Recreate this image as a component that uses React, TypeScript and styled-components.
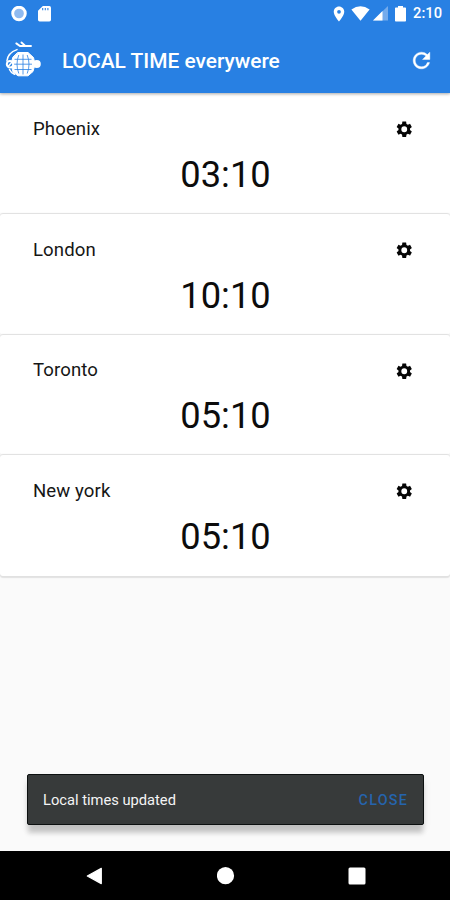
import React from "react";
import styled, { createGlobalStyle } from "styled-components";
import { MdLocationOn } from "react-icons/md";

const GlobalStyle = createGlobalStyle`
  * { box-sizing: border-box; }
  body { margin: 0; background: #fafafa; font-family: Roboto, sans-serif; }
`;

const Screen = styled.div`
  width: 450px;
  height: 900px;
  display: flex;
  flex-direction: column;
  background: #fafafa;
  overflow: hidden;
`;

const Header = styled.header`
  height: 93px;
  flex: none;
  background: #2880e3;
  color: #fff;
  box-shadow: 0 1px 3px rgba(0, 0, 0, 0.35);
  z-index: 1;
`;

const StatusBar = styled.div`
  height: 27px;
  display: flex;
  align-items: center;
  justify-content: space-between;
  padding: 0 8px 0 11px;
`;

const StatusGroup = styled.div<{ $gap: number }>`
  display: flex;
  align-items: center;
  gap: ${(p) => p.$gap}px;
  svg { display: block; }
`;

const Battery = styled.span`
  display: flex;
  margin: 0 7px 0 7px;
`;

const Clock = styled.span`
  font-size: 14.7px;
  line-height: 27px;
  font-weight: 500;
`;

const Toolbar = styled.div`
  height: 66px;
  display: flex;
  align-items: center;
  padding: 0 16px 0 4px;
`;

const Title = styled.h1`
  flex: 1;
  margin: 1px 0 0 20px;
  font-size: 20.9px;
  line-height: 26px;
  font-weight: 500;
  white-space: nowrap;
`;

const IconButton = styled.button`
  display: flex;
  padding: 0;
  border: 0;
  background: none;
  color: inherit;
`;

const List = styled.main`
  flex: 1;
`;

const Card = styled.section`
  height: 120.75px;
  padding: 23.85px 36.5px 0 33px;
  background: #fff;
  border-radius: 3px;
  & + & {
    box-shadow: 0 -0.5px 1px #dfdfdf;
  }
  &:last-child {
    box-shadow: 0 -0.5px 1px #dfdfdf, 0 2px 1px #e2e2e2;
  }
`;

const CardHead = styled.div`
  display: flex;
  align-items: center;
  justify-content: space-between;
  height: 25px;
`;

const City = styled.span`
  font-size: 18.6px;
  line-height: 25px;
  color: #161616;
  letter-spacing: 0.1px;
`;

const Time = styled.div`
  font-size: 36.3px;
  line-height: 44px;
  margin: 11px 0 0 4.5px;
  text-align: center;
  color: #0c0c0c;
`;

const Snackbar = styled.div`
  height: 51px;
  flex: none;
  margin: 0 26px 26px 27px;
  padding: 0 15px 0 15px;
  display: flex;
  align-items: center;
  justify-content: space-between;
  background: #373a3a;
  border: 1.5px solid #0c1010;
  border-radius: 2px;
  box-shadow: 0 9px 5px -1px rgba(0, 0, 0, 0.18), 0 4px 8px rgba(0, 0, 0, 0.08);
`;

const Message = styled.span`
  font-size: 14.7px;
  color: #f4f4f4;
`;

const CloseButton = styled.button`
  padding: 0;
  border: 0;
  background: none;
  font: 500 14.3px Roboto, sans-serif;
  letter-spacing: 1.25px;
  color: #2564ad;
`;

const NavBar = styled.nav`
  height: 49px;
  flex: none;
  display: flex;
  align-items: center;
  justify-content: space-between;
  padding: 0 84px 0 85px;
  background: #000;
`;

const RecordIcon = () => (
  <svg width="16" height="16" viewBox="0 0 16 16">
    <circle cx="8" cy="7.5" r="6.3" fill="#8fbaf0" stroke="#fff" strokeWidth="2.9" />
  </svg>
);

const CardIcon = () => (
  <svg width="13" height="16" viewBox="0 0 13 16">
    <path d="M4.8 0H11.3Q13 0 13 1.7V13.8Q13 15.5 11.3 15.5H1.7Q0 15.5 0 13.8V4.8Z" fill="#fff" />
    <path d="M4.7 2V4.2M7.3 2V4.2M9.9 2V4.2" stroke="#2880e3" strokeWidth="1.1" />
  </svg>
);

const WifiIcon = () => (
  <svg width="19" height="16" viewBox="0 0 20 16">
    <path d="M0.4 3.2Q10-3.4 19.6 3.2L10 15.2Z" fill="#fff" />
  </svg>
);

const SignalIcon = () => (
  <svg width="15" height="15" viewBox="0 0 15 15">
    <path d="M0 14.5 15 0V14.5Z" fill="#74abec" />
    <path d="M0 14.5 9.5 5V14.5Z" fill="#fff" />
  </svg>
);

const BatteryIcon = () => (
  <svg width="11" height="16" viewBox="0 0 11 16">
    <path d="M3 0H8V1.4H10.2Q11 1.4 11 2.2V14.7Q11 15.5 10.2 15.5H.8Q0 15.5 0 14.7V2.2Q0 1.4.8 1.4H3Z" fill="#fff" />
  </svg>
);

const RefreshIcon = () => (
  <svg width="25" height="25" viewBox="0 0 24 24">
    <path
      fill="#fff"
      stroke="#fff"
      strokeWidth="0.4"
      d="M17.65 6.35A7.958 7.958 0 0 0 12 4c-4.42 0-7.99 3.58-7.99 8s3.57 8 7.99 8c3.73 0 6.84-2.55 7.73-6h-2.08A5.99 5.99 0 0 1 12 18c-3.31 0-6-2.69-6-6s2.69-6 6-6c1.66 0 3.14.69 4.22 1.78L13 11h7V4l-2.35 2.35z"
    />
  </svg>
);

const GlobeLogo = () => (
  <svg width="38" height="38" viewBox="0 0 38 38" fill="none" stroke="#fff" strokeLinecap="round">
    <path d="M12.3 2.4 16 5H27M17.5 1.5 21 4.6" strokeWidth="1.9" />
    <path d="M13 8.6C7.8 10.4 3.4 14.5 2.9 20" strokeWidth="1.5" />
    <path d="M14 11.5H24L29.5 16.5 31 23.2 29 30.5 24 34.8H14L9 31 7 23.2 8.8 16.5Z" fill="#fff" strokeWidth="1" strokeLinejoin="round" />
    <g stroke="#2880e3" strokeWidth=".8" strokeLinecap="butt">
      <path d="M19 13.5V33.5M14.8 14Q11.2 23.2 14.8 32.5M23.2 14Q26.8 23.2 23.2 32.5" />
      <path d="M10.5 18.3H27.5M10 23.2H28M10.5 28.5H27.5" />
    </g>
    <circle cx="6" cy="23.2" r="3.2" fill="#2880e3" strokeWidth="2" />
    <path d="M4.5 25 8 21M5.5 28.5Q7 32 10.5 33.3" strokeWidth="1.5" />
    <circle cx="32.8" cy="23" r="4" fill="#fff" stroke="none" />
  </svg>
);

const GearIcon = () => (
  <svg width="18.5" height="18.5" viewBox="0 0 24 24">
    <path
      fill="#050505"
      fillRule="evenodd"
      d="M19.43 12.98c.04-.32.07-.64.07-.98s-.03-.66-.07-.98l2.11-1.65c.19-.15.24-.42.12-.64l-2-3.46c-.12-.22-.39-.3-.61-.22l-2.49 1c-.52-.4-1.08-.73-1.69-.98l-.38-2.65C14.46 2.18 14.25 2 14 2h-4c-.25 0-.46.18-.49.42l-.38 2.65c-.61.25-1.17.59-1.69.98l-2.49-1c-.23-.09-.49 0-.61.22l-2 3.46c-.13.22-.07.49.12.64l2.11 1.65c-.04.32-.07.65-.07.98s.03.66.07.98l-2.11 1.65c-.19.15-.24.42-.12.64l2 3.46c.12.22.39.3.61.22l2.49-1c.52.4 1.08.73 1.69.98l.38 2.65c.03.24.24.42.49.42h4c.25 0 .46-.18.49-.42l.38-2.65c.61-.25 1.17-.59 1.69-.98l2.49 1c.23.09.49 0 .61-.22l2-3.46c.12-.22.07-.49-.12-.64l-2.11-1.65zM12 15.8A3.8 3.8 0 1 1 12 8.2a3.8 3.8 0 0 1 0 7.6z"
    />
  </svg>
);

const BackIcon = () => (
  <svg width="18" height="18" viewBox="0 0 18 18">
    <path d="M2.3 9 16.3 1.4V16.6Z" fill="#fff" stroke="#fff" strokeWidth="1.2" strokeLinejoin="round" />
  </svg>
);

const HomeIcon = () => (
  <svg width="18" height="18" viewBox="0 0 18 18">
    <circle cx="8.5" cy="8.7" r="8.6" fill="#fff" />
  </svg>
);

const RecentsIcon = () => (
  <svg width="18" height="18" viewBox="0 0 18 18">
    <rect x=".5" y=".5" width="17" height="17" rx="1.5" fill="#fff" />
  </svg>
);

const clocks = [
  { city: "Phoenix", time: "03:10" },
  { city: "London", time: "10:10" },
  { city: "Toronto", time: "05:10" },
  { city: "New york", time: "05:10" },
];

export default function App() {
  return (
    <Screen>
      <GlobalStyle />
      <Header>
        <StatusBar>
          <StatusGroup $gap={11}>
            <RecordIcon />
            <CardIcon />
          </StatusGroup>
          <StatusGroup $gap={0}>
            <StatusGroup $gap={3}>
              <MdLocationOn size={18} />
              <WifiIcon />
              <SignalIcon />
            </StatusGroup>
            <Battery>
              <BatteryIcon />
            </Battery>
            <Clock>2:10</Clock>
          </StatusGroup>
        </StatusBar>
        <Toolbar>
          <GlobeLogo />
          <Title>LOCAL TIME everywere</Title>
          <IconButton aria-label="Refresh">
            <RefreshIcon />
          </IconButton>
        </Toolbar>
      </Header>
      <List>
        {clocks.map((c) => (
          <Card key={c.city}>
            <CardHead>
              <City>{c.city}</City>
              <IconButton aria-label={`Settings for ${c.city}`}>
                <GearIcon />
              </IconButton>
            </CardHead>
            <Time>{c.time}</Time>
          </Card>
        ))}
      </List>
      <Snackbar>
        <Message>Local times updated</Message>
        <CloseButton>CLOSE</CloseButton>
      </Snackbar>
      <NavBar>
        <BackIcon />
        <HomeIcon />
        <RecentsIcon />
      </NavBar>
    </Screen>
  );
}
